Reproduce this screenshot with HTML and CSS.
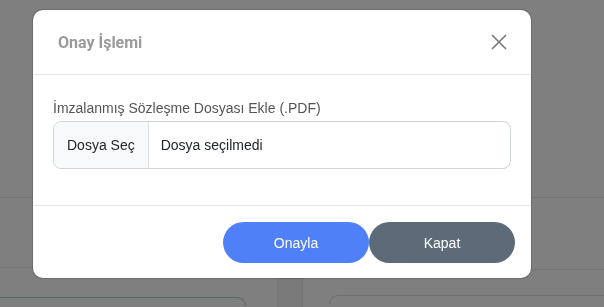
FILE: index.html
```html
<!DOCTYPE html>
<html lang="tr">
<head>
	<meta charset="UTF-8">
	<title>Onay İşlemi</title>
	<link rel="stylesheet" href="styles.css">
</head>
<body>
	<!-- arka plandaki sayfa (karartılmış) -->
	<div class="page">
		<div class="page-top"></div>
		<div class="page-cols">
			<div class="col-left">
				<div class="row-left"></div>
				<div class="card-green"></div>
			</div>
			<div class="gutter"></div>
			<div class="col-right">
				<div class="row-right"></div>
				<div class="card-right"></div>
			</div>
		</div>
	</div>

	<!-- modal -->
	<div class="modal">
		<div class="modal-header">
			<h5 class="modal-title">Onay İşlemi</h5>
			<button class="btn-close" aria-label="Kapat">
				<svg width="16" height="16" viewBox="0 0 16 16"><path d="M1 1L15 15M15 1L1 15" stroke="#777" stroke-width="1.6" fill="none"/></svg>
			</button>
		</div>
		<div class="modal-body">
			<label class="form-label">İmzalanmış Sözleşme Dosyası Ekle (.PDF)</label>
			<div class="file-input">
				<span class="file-btn">Dosya Seç</span>
				<span class="file-name">Dosya seçilmedi</span>
			</div>
		</div>
		<div class="modal-footer">
			<button class="btn btn-primary">Onayla</button>
			<button class="btn btn-secondary">Kapat</button>
		</div>
	</div>
</body>
</html>
```
FILE: styles.css
```css
html,
body{
	margin: 0;
	padding: 0;
	width: 100%;
	height: 100%;
	overflow: hidden;
}
body{
	background-color: #7f7f7f;
	font-family: "Liberation Sans", Arial, sans-serif;
}
/* arka plan */
.page{
	height: 307px;
	overflow: hidden;
	display: flex;
	flex-direction: column;
}
.page-top{
	height: 197px;
	flex-shrink: 0;
	border-bottom: 1px solid #747474;
}
.page-cols{
	flex: 1;
	display: flex;
}
.col-left{
	width: 277px;
}
.row-left{
	height: 69px;
	border-bottom: 1px solid #747474;
}
.card-green{
	width: 245px;
	height: 8px;
	margin-top: 29px;
	border-top: 1px solid #4d6b5e;
	border-right: 1px solid #4d6b5e;
	border-top-right-radius: 16px;
}
.gutter{
	width: 24px;
	background-color: #7a7a7a;
	border-left: 1px solid #757575;
	border-right: 1px solid #757575;
}
.col-right{
	flex: 1;
}
.row-right{
	height: 71px;
	border-bottom: 1px solid #747474;
}
.card-right{
	height: 8px;
	margin-top: 25px;
	margin-left: 26px;
	border-top: 1px solid #6e6e6e;
	border-left: 1px solid #6e6e6e;
	border-top-left-radius: 12px;
}
/* modal */
.modal{
	position: fixed;
	top: 10px;
	left: 33px;
	width: 498px;
	background-color: #fff;
	border-radius: 10px;
	box-shadow: 0 0 0 1px rgba(0,0,0,0.15);
}
.modal-header{
	height: 64px;
	display: flex;
	align-items: center;
	justify-content: space-between;
	padding: 0 24px 0 25px;
	border-bottom: 1px solid #e5e5e5;
}
.modal-title{
	margin: 0;
	font-family: Roboto, "Liberation Sans", sans-serif;
	font-size: 16px;
	font-weight: bold;
	color: #9a9a9a;
}
.btn-close{
	border: 0;
	padding: 0;
	background: none;
	width: 16px;
	height: 16px;
	display: flex;
	cursor: pointer;
}
.modal-body{
	height: 131px;
	padding: 25px 20px 0;
	box-sizing: border-box;
	border-bottom: 1px solid #e5e5e5;
}
.form-label{
	display: block;
	font-size: 14px;
	color: #555;
	margin-bottom: 5px;
}
.file-input{
	display: flex;
	height: 48px;
	border: 1px solid #ced4da;
	border-radius: 8px;
	overflow: hidden;
	box-sizing: border-box;
	font-size: 14px;
	color: #212529;
}
.file-btn{
	display: flex;
	align-items: center;
	padding: 0 13px;
	background-color: #f8f9fa;
	border-right: 1px solid #dee2e6;
}
.file-name{
	display: flex;
	align-items: center;
	padding: 0 12px;
}
.modal-footer{
	display: flex;
	justify-content: flex-end;
	padding: 16px 16px 15px;
}
.btn{
	width: 146px;
	height: 41px;
	border: 0;
	border-radius: 21px;
	font-family: "Liberation Sans", Arial, sans-serif;
	font-size: 14px;
	color: #fff;
	cursor: pointer;
}
.btn-primary{
	background-color: #4f80f8;
}
.btn-secondary{
	background-color: #5c6b77;
}
```
